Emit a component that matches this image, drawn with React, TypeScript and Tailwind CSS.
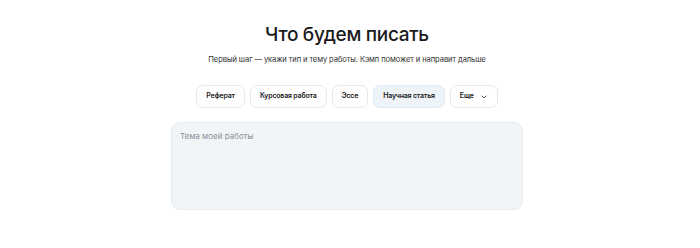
import { ChevronDown } from "lucide-react";

const chips = ["Реферат", "Курсовая работа", "Эссе", "Научная статья"];

export default function App() {
  return (
    <div
      className="flex h-[248px] w-[694px] flex-col items-center bg-white text-[#1a1a1a]"
      style={{ fontFamily: "Inter, 'Noto Sans', sans-serif" }}
    >
      <h1 className="mt-[23px] text-[19px] font-medium leading-[24px] tracking-[-0.3px]">
        Что будем писать
      </h1>
      <p className="mt-[7px] text-[7.6px] leading-[12px] tracking-[-0.1px] text-[#333]">
        Первый шаг — укажи тип и тему работы. Кэмп поможет и направит дальше
      </p>
      <div className="mt-[19px] flex gap-[5px]">
        {chips.map((c) => (
          <button
            key={c}
            className={
              c === "Научная статья"
                ? "h-[23px] rounded-[7px] border border-[#e3e9ef] bg-[#eef3f7] px-[9px] text-[7px] font-semibold tracking-[-0.2px]"
                : "h-[23px] rounded-[7px] border border-[#e8e8e8] bg-white px-[9px] text-[7px] font-semibold tracking-[-0.2px]"
            }
          >
            {c}
          </button>
        ))}
        <button className="flex h-[23px] items-center gap-[6px] rounded-[7px] border border-[#e8e8e8] bg-white px-[9px] text-[7px] font-semibold tracking-[-0.2px]">
          Еще
          <ChevronDown size={8} strokeWidth={2.2} />
        </button>
      </div>
      <div className="mt-[14px] h-[88px] w-[352px] rounded-[9px] border border-[#e6ebf0] bg-[#f1f5f8] px-[8px] py-[7px] text-[8px] text-[#8a8f95]">
        Тема моей работы
      </div>
    </div>
  );
}
